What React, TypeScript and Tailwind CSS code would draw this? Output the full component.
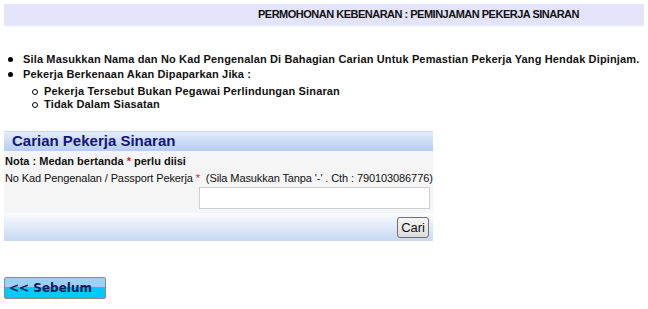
export default function App() {
  return (
    <div className="w-[648px] h-[309px] bg-white text-black font-['Liberation_Sans',Arial,sans-serif] overflow-hidden">
      {/* page title */}
      <div className="mx-[4px] mt-[4px] h-[23px] bg-[#e3e3fa] border-b-[2px] border-[#efeffd] flex items-center">
        <div className="w-[254px]" />
        <span className="font-bold text-[11px] text-[#111] tracking-[-0.5px]">
          PERMOHONAN KEBENARAN : PEMINJAMAN PEKERJA SINARAN
        </span>
      </div>

      {/* notes */}
      <ul className="mt-[25px] ml-[8px] text-[11px] font-bold text-[#111] leading-[15px] tracking-[0.15px]">
        <li className="flex items-center gap-[10px]">
          <span className="w-[5px] h-[5px] rounded-full bg-black" />
          <span>Sila Masukkan Nama dan No Kad Pengenalan Di Bahagian Carian Untuk Pemastian Pekerja Yang Hendak Dipinjam.</span>
        </li>
        <li className="flex items-center gap-[10px]">
          <span className="w-[5px] h-[5px] rounded-full bg-black" />
          <span>Pekerja Berkenaan Akan Dipaparkan Jika :</span>
        </li>
        <li className="mt-[3px] ml-[24px]">
          <ul>
            <li className="flex items-center gap-[6px] h-[13px]">
              <span className="w-[6px] h-[6px] rounded-full border border-black" />
              <span>Pekerja Tersebut Bukan Pegawai Perlindungan Sinaran</span>
            </li>
            <li className="flex items-center gap-[6px] h-[13px]">
              <span className="w-[6px] h-[6px] rounded-full border border-black" />
              <span>Tidak Dalam Siasatan</span>
            </li>
          </ul>
        </li>
      </ul>

      {/* search panel */}
      <div className="mt-[20px] ml-[4px] w-[429px]">
        <div className="h-[20px] bg-gradient-to-b from-[#e3ecfa] to-[#b6cdf1] border-t border-[#c9d9f3] flex items-center pl-[8px]">
          <span className="text-[15px] font-bold text-[#14147d]">Carian Pekerja Sinaran</span>
        </div>
        <div className="bg-[#f5f5f5] pt-[2px] pb-[4px]">
          <div className="px-[1px] text-[11px] font-bold text-[#111] leading-[16px]">
            Nota : Medan bertanda <span className="text-[#e02020]">*</span> perlu diisi
          </div>
          <div className="px-[1px] text-[11px] text-[#111] leading-[18px] whitespace-nowrap tracking-[-0.1px]">
            No Kad Pengenalan / Passport Pekerja <span className="text-[#e02020]">*</span>&nbsp; (Sila Masukkan Tanpa '-' . Cth : 790103086776)
          </div>
          <div className="flex">
            <div className="w-[195px]" />
            <input className="w-[231px] h-[22px] bg-white border border-[#cfcfcf] outline-none" />
          </div>
        </div>
        <div className="h-[28px] bg-gradient-to-b from-[#fbfcfe] to-[#c7d8f3] flex items-center justify-end pr-[4px]">
          <button className="h-[21px] px-[3px] bg-gradient-to-b from-[#f6f6f6] to-[#dcdcdc] border border-[#707070] rounded-[3px] text-[13px] text-[#111] leading-none">
            Cari
          </button>
        </div>
      </div>

      {/* back button */}
      <div className="mt-[36px] ml-[4px]">
        <button className="w-[102px] h-[22px] border border-[#8a8a8a] rounded-[2px] bg-[linear-gradient(to_bottom,#9fcff9_0%,#9fcff9_45%,#00c8f8_45%,#00c8f8_100%)] flex items-center pl-[4px] font-['DejaVu_Sans',Verdana,sans-serif] font-bold text-[12px] text-[#0a1a50]">
          &lt;&lt; Sebelum
        </button>
      </div>
    </div>
  );
}
